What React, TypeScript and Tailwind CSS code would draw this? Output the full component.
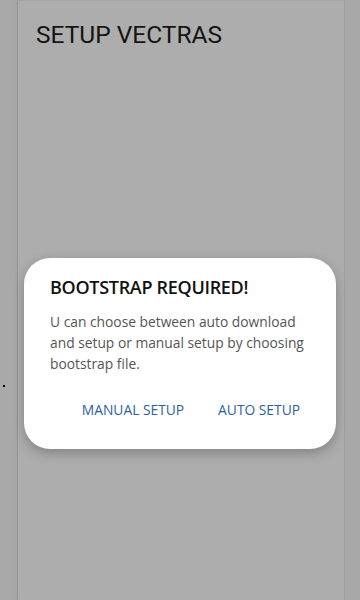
export default function App() {
  return (
    <div className="relative h-[600px] w-[360px] overflow-hidden bg-[#acacac] font-['Roboto',sans-serif]">
      <div className="flex h-full">
        {/* left edge of previous screen */}
        <div className="w-[18px] border-r border-[#9e9e9e] bg-[#a9a9a9]" />
        {/* main screen */}
        <div className="flex-1 border-t border-[#a4a4a4] bg-[#adadad] pl-[18px] pt-[20px] shadow-[0_0_3px_rgba(0,0,0,0.15)]">
          <h1 className="text-[24.5px] leading-[28px] text-[#141414]">SETUP VECTRAS</h1>
        </div>
        <div className="w-[16px] border-l border-[#9f9f9f] bg-[#a8a8a8]" />
      </div>

      {/* stray dot */}
      <div className="absolute left-[3px] top-[385px] h-[2px] w-[2px] bg-black" />

      {/* dialog */}
      <div className="absolute inset-x-0 top-[258px] px-[24px]">
        <div className="rounded-[26px] bg-white pb-[29px] pl-[26px] pr-[25px] pt-[18px] shadow-[0_4px_12px_rgba(0,0,0,0.25)] font-['Open_Sans',sans-serif]">
          <h2 className="text-[18px] font-semibold leading-[22px] tracking-[-0.3px] text-[#111]">
            BOOTSTRAP REQUIRED!
          </h2>
          <p className="mt-[13px] text-[13.8px] leading-[21px] text-[#555]">
            U can choose between auto download and setup or manual setup by choosing bootstrap file.
          </p>
          <div className="mt-[26px] flex justify-end gap-[34px] pl-[4px] pr-[11px] text-[13.8px] font-medium leading-[20px] text-[#2d5fa0]">
            <button>MANUAL SETUP</button>
            <button>AUTO SETUP</button>
          </div>
        </div>
      </div>
    </div>
  );
}
